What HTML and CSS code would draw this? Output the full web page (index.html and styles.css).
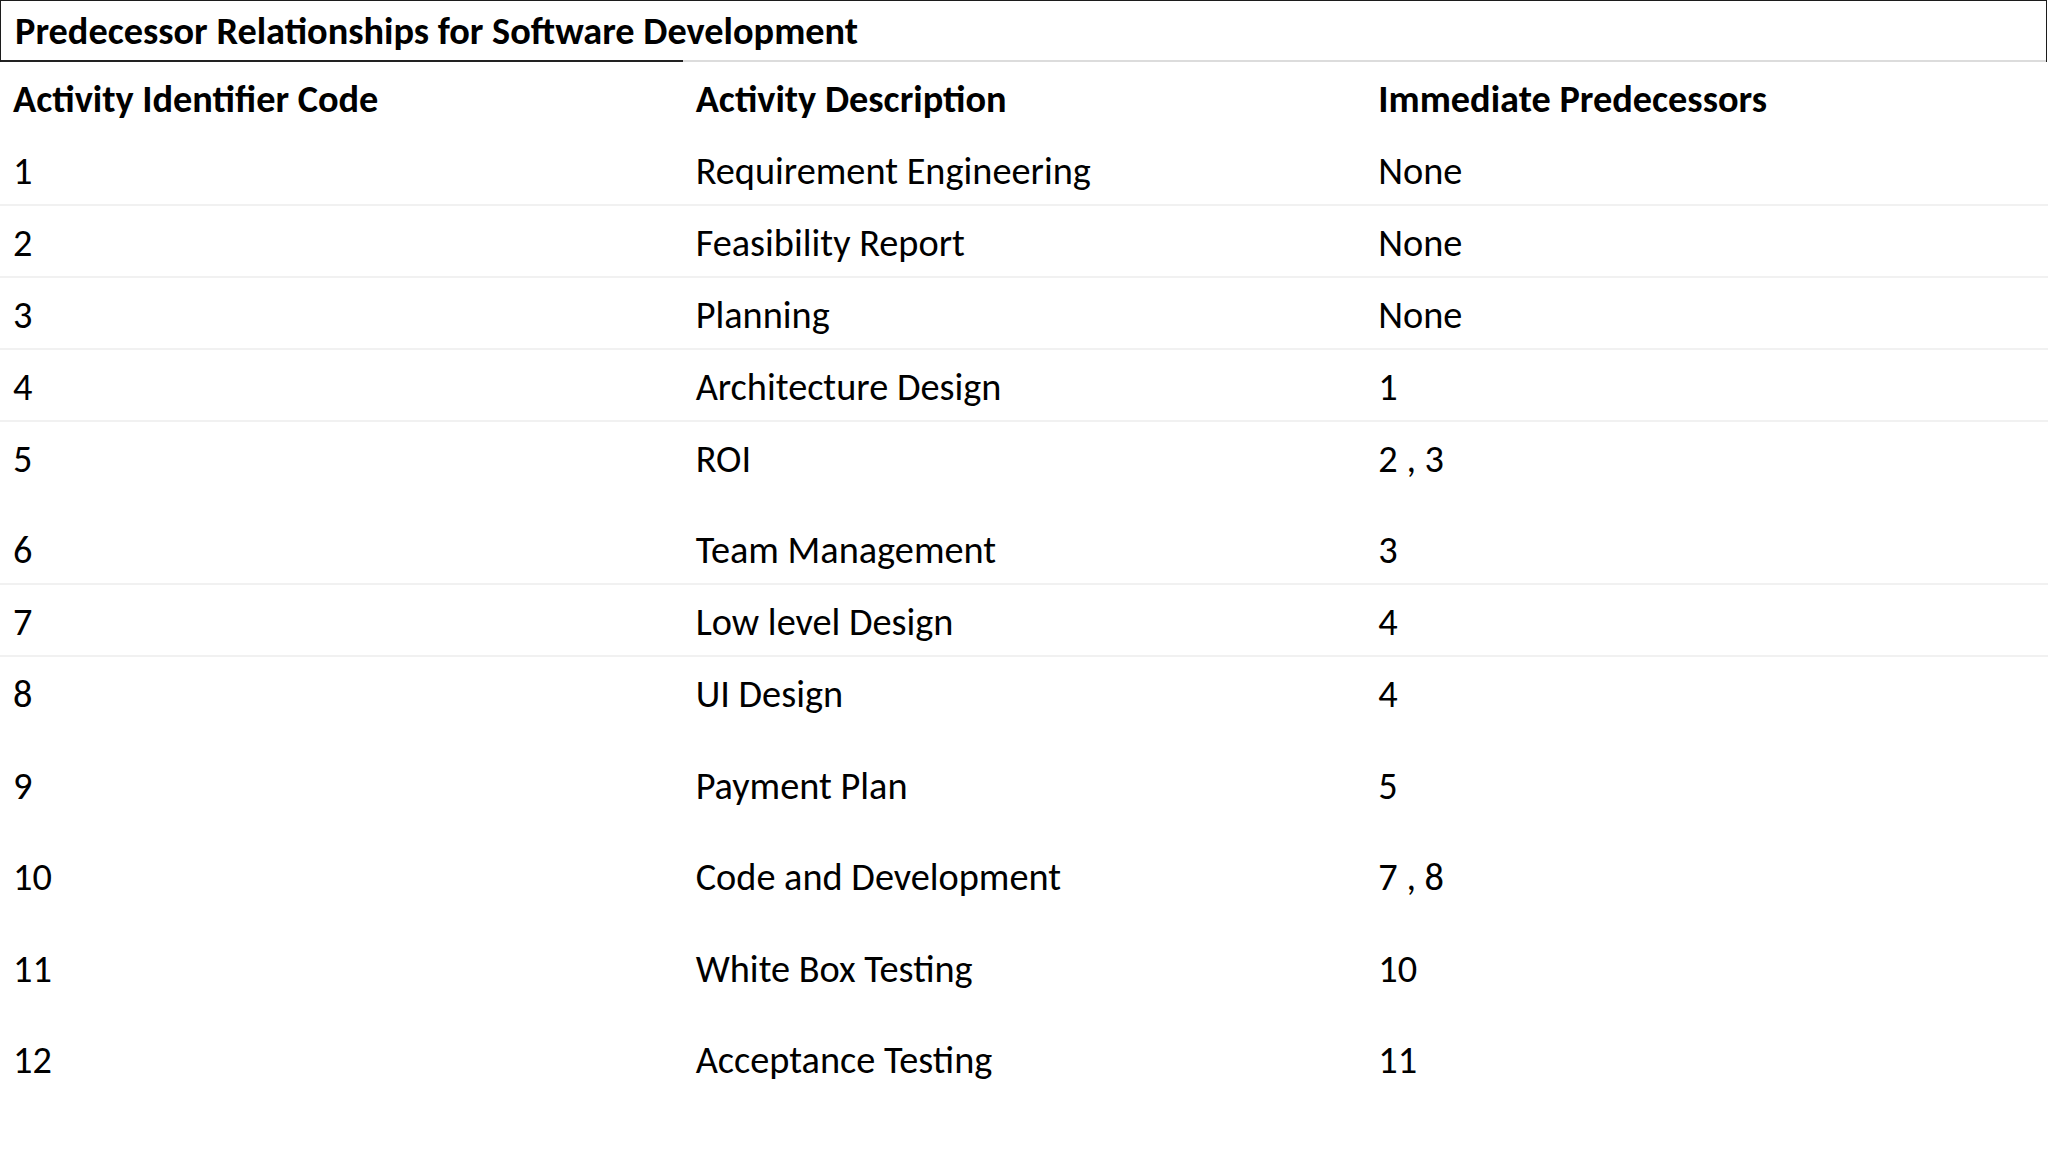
FILE: index.html
```html
<!DOCTYPE html>
<html lang="en">
<head>
<meta charset="utf-8">
<title>Predecessor Relationships for Software Development</title>
<link rel="stylesheet" href="styles.css">
</head>
<body>
<main class="page">
  <header class="title-box">
    <h1 class="title">Predecessor Relationships for Software Development</h1>
    <div class="title-rule"><span class="rule-dark"></span><span class="rule-light"></span></div>
  </header>
  <section class="table">
    <div class="row head">
      <div class="cell">Activity Identifier Code</div>
      <div class="cell">Activity Description</div>
      <div class="cell">Immediate Predecessors</div>
    </div>
    <div class="row"><div class="cell">1</div><div class="cell">Requirement Engineering</div><div class="cell">None</div></div>
    <div class="row"><div class="cell">2</div><div class="cell">Feasibility Report</div><div class="cell">None</div></div>
    <div class="row"><div class="cell">3</div><div class="cell">Planning</div><div class="cell">None</div></div>
    <div class="row"><div class="cell">4</div><div class="cell">Architecture Design</div><div class="cell">1</div></div>
    <div class="row tall"><div class="cell">5</div><div class="cell">ROI</div><div class="cell">2 , 3</div></div>
    <div class="row"><div class="cell">6</div><div class="cell">Team Management</div><div class="cell">3</div></div>
    <div class="row"><div class="cell">7</div><div class="cell">Low level Design</div><div class="cell">4</div></div>
    <div class="row tall"><div class="cell">8</div><div class="cell">UI Design</div><div class="cell">4</div></div>
    <div class="row tall"><div class="cell">9</div><div class="cell">Payment Plan</div><div class="cell">5</div></div>
    <div class="row tall"><div class="cell">10</div><div class="cell">Code and Development</div><div class="cell">7 , 8</div></div>
    <div class="row tall"><div class="cell">11</div><div class="cell">White Box Testing</div><div class="cell">10</div></div>
    <div class="row tall"><div class="cell">12</div><div class="cell">Acceptance Testing</div><div class="cell">11</div></div>
  </section>
</main>
</body>
</html>
```

FILE: styles.css
```css
html, body {
  margin: 0;
  padding: 0;
  background: #ffffff;
}

body {
  width: 2048px;
  font-family: "Carlito", "Open Sans", "Liberation Sans", sans-serif;
  color: #000000;
}

.page {
  display: flex;
  flex-direction: column;
}

.title-box {
  margin-right: 1px;
  border: 1px solid #1c1c1c;
  border-bottom: none;
}

.title {
  margin: 0;
  padding: 8.1px 12px 6.9px 14px;
  font-size: 38.3px;
  line-height: 44px;
  font-weight: 700;
}

.title-rule {
  display: grid;
  grid-template-columns: 682px 1fr;
  height: 2px;
}

.rule-dark {
  background: #222222;
}

.rule-light {
  background: #dcdcdc;
}

.table {
  display: flex;
  flex-direction: column;
}

.row {
  display: grid;
  grid-template-columns: repeat(3, 1fr);
  border-bottom: 2px solid #f1f1f1;
}

.row.head,
.row.tall {
  border-bottom-color: transparent;
}

.cell {
  padding: 14.8px 13px 11.2px;
  font-size: 38.3px;
  line-height: 44px;
  white-space: nowrap;
}

.row.head .cell {
  font-weight: 700;
}

.row.tall .cell {
  padding-bottom: 30.7px;
}
```
